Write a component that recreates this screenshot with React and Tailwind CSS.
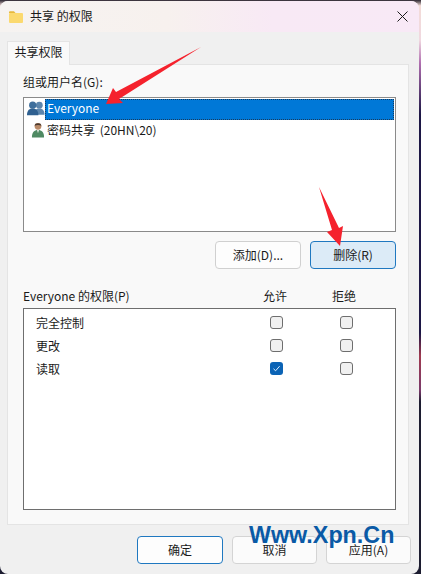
const font = { fontFamily: '"Noto Sans CJK SC", "Noto Sans", sans-serif' };

function Btn({ children, className = "" }) {
  return (
    <div className={`h-[28px] rounded-[4px] border flex items-center justify-center text-[12px] text-[#1a1a1a] ${className}`}>
      <span className="-mt-px">{children}</span>
    </div>
  );
}

function Check({ checked }) {
  return checked ? (
    <div className="w-[13px] h-[13px] rounded-[3px] bg-[#0b63b5] flex items-center justify-center">
      <svg width="9" height="9" viewBox="0 0 9 9" fill="none">
        <path d="M1.5 4.8 L3.6 6.8 L7.6 2.2" stroke="#dff0ff" strokeWidth="1" />
      </svg>
    </div>
  ) : (
    <div className="w-[13px] h-[13px] rounded-[3px] border border-[#6e6e6e] bg-[#f0f0f0]" />
  );
}

function PermRow({ label, allow }) {
  return (
    <div className="h-[23px] flex items-center text-[12px] text-[#1a1a1a]">
      <span className="w-[246px] pl-[12px] leading-none">{label}</span>
      <div className="w-[13px]"><Check checked={allow} /></div>
      <div className="w-[57px]" />
      <div className="w-[13px]"><Check /></div>
    </div>
  );
}

function Group() {
  return (
    <svg width="18" height="15" viewBox="0 0 19 15">
      <circle cx="13" cy="4" r="3.6" fill="#5d86ad" />
      <path d="M7.5 14 C7.5 9 10 7.5 13 7.5 C16 7.5 18.5 9 18.5 14 Z" fill="#5d86ad" />
      <circle cx="6" cy="4" r="3.8" fill="#3f6f9c" />
      <path d="M0 14.5 C0 9 3 7.5 6 7.5 C9 7.5 12 9 12 14.5 Z" fill="#2f6090" />
    </svg>
  );
}

function User() {
  return (
    <svg width="14" height="16" viewBox="0 0 15 17">
      <circle cx="7.5" cy="4.5" r="3.6" fill="#b98a68" />
      <path d="M3.8 4 C4 0.5 11 0.5 11.2 4 C9 2.8 6 2.8 3.8 4 Z" fill="#4a3a30" />
      <path d="M1 16.5 C1 10.5 3.5 8.5 7.5 8.5 C11.5 8.5 14 10.5 14 16.5 Z" fill="#4f8a63" />
      <path d="M6.4 8.5 L8.6 8.5 L7.5 12 Z" fill="#e9efe9" />
    </svg>
  );
}

export default function App() {
  return (
    <div className="relative w-[421px] h-[574px] overflow-hidden pt-px bg-[linear-gradient(180deg,#2b2530_0%,#f3dcd8_1%,#f0d8e0_7%,#b06fb0_11%,#1c1645_20%,#1c1645_58%,#a03a50_62%,#7a3a6a_68%,#1c1c30_70%,#1c1c30_100%)]" style={font}>
      <div className="w-[419px] h-[573px] rounded-[8px] overflow-hidden bg-[#f0f0f0] flex flex-col">
        <div className="h-[31px] shrink-0 flex items-center justify-between bg-[linear-gradient(90deg,#f6f3f1_0%,#f7f1ee_40%,#f8e9f5_65%,#f8e9f6_100%)]">
          <div className="flex items-center">
            <svg className="ml-[9px]" width="14" height="12" viewBox="0 0 14 12">
              <path d="M0 1.5 C0 0.7 0.5 0.3 1.2 0.3 L5 0.3 L6.5 2 L0 2 Z" fill="#e6b93d" />
              <rect x="0" y="2" width="14" height="10" rx="1" fill="#fbd96f" />
            </svg>
            <span className="ml-[7px] -mt-px text-[12px] text-[#1a1a1a] leading-none">共享 的权限</span>
          </div>
          <svg className="mr-[11px] mt-[-1px]" width="11" height="11" viewBox="0 0 11 11" fill="none">
            <path d="M0.5 0.5 L10.5 10.5 M10.5 0.5 L0.5 10.5" stroke="#1a1a1a" strokeWidth="1" />
          </svg>
        </div>

        <div className="flex-1 px-[7px] pt-[9px]">
          <div className="w-[63px] h-[24px] bg-[#f9f9f9] border border-b-0 border-[#e4e4e4] flex items-center justify-center text-[12px] leading-none pb-[4px] text-[#1a1a1a] relative z-10">
            共享权限
          </div>
          <div className="w-[402px] h-[461px] -mt-px bg-[#f9f9f9] border border-[#e4e4e4] pl-[15px] pr-[12px] pt-[9px]">
            <div className="text-[12px] leading-[16px] text-[#1a1a1a]">组或用户名(G):</div>
            <div className="mt-[7px] w-[373px] h-[135px] bg-white border border-[#8a8a8a] pt-px pr-px">
              <div className="h-[21px] flex items-center">
                <div className="w-[21px] shrink-0 flex justify-end -mt-[3px]"><Group /></div>
                <div className="flex-1 h-[21px] bg-[#0078d7] border border-dotted border-[#1a3a5a] flex items-center pl-[1px] pb-[3px] text-[12px] text-white">Everyone</div>
              </div>
              <div className="h-[21px] flex items-center text-[12px] text-[#1a1a1a]">
                <div className="w-[21px] shrink-0 flex justify-end -mt-[2px]"><User /></div>
                <span className="pl-[2px] -mt-[2px] [word-spacing:2px]">密码共享 (20HN\20)</span>
              </div>
            </div>
            <div className="mt-[9px] flex justify-end gap-[9px]">
              <Btn className="w-[86px] border-[#d0d0d0] bg-[#fdfdfd]">添加(D)...</Btn>
              <Btn className="w-[86px] border-[#1f78c0] bg-[#dcebf7]">删除(R)</Btn>
            </div>
            <div className="mt-[19px] h-[16px] flex items-center text-[12px] text-[#1a1a1a]">
              <span className="w-[240px]">Everyone 的权限(P)</span>
              <span className="w-[69px]">允许</span>
              <span>拒绝</span>
            </div>
            <div className="mt-[4px] w-[373px] h-[202px] bg-white border border-[#6e6e6e] pt-[2px]">
              <PermRow label="完全控制" />
              <PermRow label="更改" />
              <PermRow label="读取" allow />
            </div>
          </div>
          <div className="mt-[11px] w-[404px] flex justify-end gap-[9px]">
            <Btn className="w-[86px] border-[#1f78c0] bg-[#fdfdfd]">确定</Btn>
            <Btn className="w-[85px] border-[#d4d4d4] bg-[#fbfbfb]">取消</Btn>
            <Btn className="w-[85px] border-[#d4d4d4] bg-[#fbfbfb]">应用(A)</Btn>
          </div>
        </div>
      </div>

      <svg className="absolute left-0 top-0 pointer-events-none" width="421" height="574" viewBox="0 0 421 574">
        <path d="M201 47 L116 92 L113 88 L106 104 L123 103 L119 99 Z" fill="#f5222d" />
        <path d="M319 187 L339 228 L343 226 L340 246 L327 232 L332 230 Z" fill="#f5222d" />
      </svg>
      <div className="absolute left-[249px] top-[519px] text-[23.3px] font-bold leading-[32px] text-[#0a5aa6] whitespace-nowrap" style={{ fontFamily: '"Liberation Sans", sans-serif' }}>Www.Xpn.Cn</div>
    </div>
  );
}
